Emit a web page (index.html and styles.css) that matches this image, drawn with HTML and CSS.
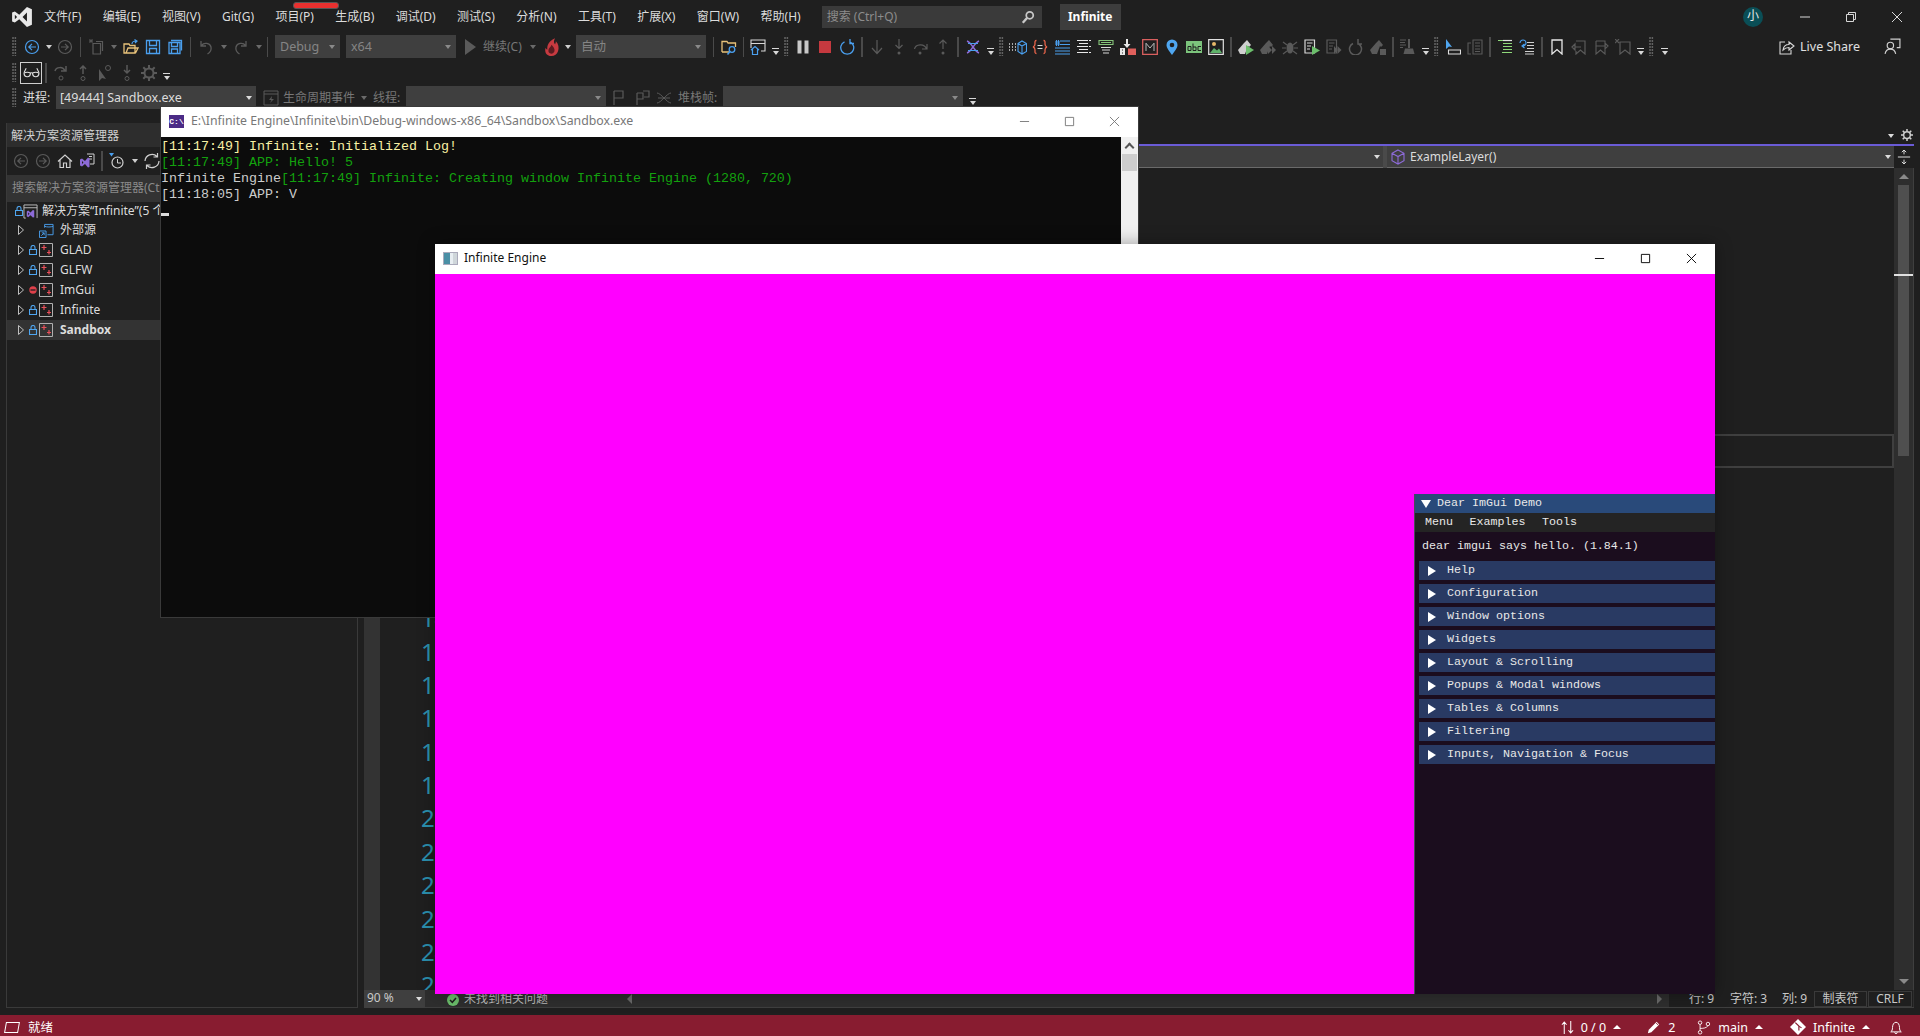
FILE: index.html
```html
<!DOCTYPE html>
<html lang="zh-CN">
<head>
<meta charset="utf-8">
<title>Infinite - Microsoft Visual Studio</title>
<link rel="stylesheet" href="styles.css">
</head>
<body>
<svg class="sprite" aria-hidden="true">
<defs>
<symbol id="back" viewBox="0 0 16 16"><circle cx="8" cy="8" r="6.5" fill="none" stroke="currentColor" stroke-width="1.2"/><path d="M12 8H5M8 4.8 4.8 8 8 11.2" fill="none" stroke="currentColor" stroke-width="1.2"/></symbol>
<symbol id="fwd" viewBox="0 0 16 16"><circle cx="8" cy="8" r="6.5" fill="none" stroke="currentColor" stroke-width="1.2"/><path d="M4 8h7M8 4.8 11.2 8 8 11.2" fill="none" stroke="currentColor" stroke-width="1.2"/></symbol>
<symbol id="newp" viewBox="0 0 16 16"><path d="M5 4.5h7.5V15H5zM8 2.5h6.5V12" fill="none" stroke="currentColor" stroke-width="1.2"/><path d="M3 0v4M1 2h4M1 .5l4 3M5 .5l-4 3" stroke="currentColor" stroke-width=".8"/></symbol>
<symbol id="open" viewBox="0 0 16 16"><path d="M1 14V5h5l1 1.500h5V14zM3 14l2-5h10l-2.500 5" fill="#1f1f1f" stroke="#e8c27a" stroke-width="1.300"/><path d="M9 5c0-2 2-3 4-3M11.500.5 14 2l-2 2" fill="none" stroke="#4a9fee" stroke-width="1.200"/></symbol>
<symbol id="save" viewBox="0 0 16 16"><path d="M1.500 1.500h13v13h-13zM4.500 1.500v5h7v-5M4.500 14.500v-5h7v5" fill="none" stroke="#4a9fee" stroke-width="1.300"/></symbol>
<symbol id="saveall" viewBox="0 0 16 16"><path d="M2 3.500h11v11H2zM4.500 3.500v4h6v-4M4.500 14.500v-4.500h6v4.500M4 1.500h10.500v10" fill="none" stroke="#4a9fee" stroke-width="1.300"/></symbol>
<symbol id="undo" viewBox="0 0 16 16"><path d="M3 2v5h5M3.500 6.500C6 3 12 4 13 8c.6 3-1 5.500-3.500 7" fill="none" stroke="currentColor" stroke-width="1.300"/></symbol>
<symbol id="redo" viewBox="0 0 16 16"><path d="M13 2v5H8M12.500 6.500C10 3 4 4 3 8c-.6 3 1 5.500 3.500 7" fill="none" stroke="currentColor" stroke-width="1.300"/></symbol>
<symbol id="play" viewBox="0 0 16 16"><path d="M2 0v16l11-8z" fill="currentColor"/></symbol>
<symbol id="flame" viewBox="0 0 16 16"><path d="M8 16C3.500 16 2 12.500 3 9c.4 1 1 1.500 1.500 1.500C4 7 6 3 11 1 9.500 3.500 10 5 11 6c.5-.8.7-1.500.7-2.500C14 6 14.500 9 13.500 12c-.8 2.500-3 4-5.500 4z" fill="#c63a40"/><path d="M8 14c-2 0-3-1.500-2.500-3.500.5-1.500 2-2 2.500-4 1.500 1.500 3 3.500 2.500 5.500C10 13.300 9 14 8 14z" fill="#5a1b20"/></symbol>
<symbol id="fsearch" viewBox="0 0 16 16"><path d="M1 13V2.500h5l1 1.500h7.500v4M1 13h7" fill="none" stroke="#e8c27a" stroke-width="1.300"/><circle cx="11" cy="10.500" r="2.800" fill="none" stroke="#4a9fee" stroke-width="1.300"/><path d="M9 12.500 6.500 15.500" stroke="#4a9fee" stroke-width="1.500"/></symbol>
<symbol id="winhome" viewBox="0 0 16 16"><path d="M1 9V1h14v11h-4M1 4.500h14" fill="none" stroke="#d8d8d8" stroke-width="1.100"/><path d="M1 11l4-3.500L9 11M2.500 10v5.500h5V10" fill="none" stroke="#4a9fee" stroke-width="1.200"/></symbol>
<symbol id="pause" viewBox="0 0 16 16"><path d="M2.500 1.500h4v13h-4zM9.500 1.500h4v13h-4z" fill="#c8c8c8"/></symbol>
<symbol id="stop" viewBox="0 0 16 16"><path d="M2 2h12v12H2z" fill="#c5393f"/></symbol>
<symbol id="restart" viewBox="0 0 16 16"><path d="M5.500 2.800a6.500 6.500 0 1 0 5.500 0M11 0v4.500h4" fill="none" stroke="#4a9fee" stroke-width="1.300"/></symbol>
<symbol id="sdown" viewBox="0 0 16 16"><path d="M8 1v13M3 9l5 5.500L13 9" fill="none" stroke="currentColor" stroke-width="1.200"/></symbol>
<symbol id="sover" viewBox="0 0 16 16"><circle cx="8" cy="14" r="1.500" fill="currentColor"/><path d="M8 0v9M4.500 6 8 9.500 11.500 6" fill="none" stroke="currentColor" stroke-width="1.200"/></symbol>
<symbol id="scurve" viewBox="0 0 16 16"><circle cx="7" cy="14" r="1.500" fill="currentColor"/><path d="M1.500 10c1-5 10-6 12 0M14 5v5h-5" fill="none" stroke="currentColor" stroke-width="1.200"/></symbol>
<symbol id="sup" viewBox="0 0 16 16"><circle cx="8" cy="14" r="1.500" fill="currentColor"/><path d="M8 10V1M4.500 4.500 8 1l3.500 3.500" fill="none" stroke="currentColor" stroke-width="1.200"/></symbol>
<symbol id="dna" viewBox="0 0 16 16"><path d="M2 2c5 2 7 10 12 12M14 2C9 4 7 12 2 14" fill="none" stroke="#8d6bd8" stroke-width="1.400"/><path d="M3 4.500h10M3 11.500h10" stroke="#4a9fee" stroke-width="1.200"/></symbol>
<symbol id="cube" viewBox="0 0 18 16"><path d="M0 5h1M3 5h1M6 5h1M0 8h1M3 8h1M6 8h1M0 11h1M3 11h1M6 11h1" stroke="#d8d8d8" stroke-width="1.500"/><path d="M9 4.500 13 2l4.500 2.500v8L13 15l-4-2.500zM9 4.500l4 2.500 4.500-2.500M13 7v8" fill="none" stroke="#4a9fee" stroke-width="1.100"/></symbol>
<symbol id="braces" viewBox="0 0 16 16"><path d="M4.500 1.500C2.500 1.500 3 3.500 3 5S3 7.500 1 8c2 .5 2 1.500 2 3s-.5 3.500 1.500 3.500M11.500 1.500c2 0 1.500 2 1.500 3.500s0 2.500 2 3c-2 .5-2 1.500-2 3s.5 3.500-1.500 3.500" fill="none" stroke="#e8644a" stroke-width="1.300"/><path d="M5.500 6.500h5M5.500 9.500h5" stroke="#d8d8d8" stroke-width="1.100"/></symbol>
<symbol id="hlist" viewBox="0 0 16 16"><path d="M6 2h10M6 5.500h10M1 9h15M1 12h15M1 15h15M2.500 1v6M4.500 1v6M1 3h5M1 5h5" stroke="#4a9fee" stroke-width="1.100"/></symbol>
<symbol id="wlines" viewBox="0 0 16 16"><path d="M1 1.500h14M3 4.500h9M1 7.500h14M3 10.500h9M1 13.500h14" stroke="#e8e8e8" stroke-width="1.100" stroke-dasharray="11 1"/></symbol>
<symbol id="glines" viewBox="0 0 16 16"><path d="M1 1.500h14v4H1z" fill="none" stroke="#86c37a" stroke-width="1.100"/><path d="M3 8.500h10M4 11h8M5 14h6" stroke="#d8d8d8" stroke-width="1.100"/><path d="M3 3.500h10" stroke="#86c37a"/></symbol>
<symbol id="dl" viewBox="0 0 16 16"><path d="M6 0v5H3.500L7 9l3.500-4H8V0z" fill="#e8e8e8"/><path d="M0 9h5v7H0z" fill="#e8e8e8"/><path d="M2 11h1M2 14h1" stroke="#1f1f1f" stroke-width="1.200"/><path d="M8 9.500h8V16H8z" fill="#e0605c"/></symbol>
<symbol id="mbox" viewBox="0 0 16 16"><path d="M.7.7h14.600v14.600H.7z" fill="none" stroke="#d9605f" stroke-width="1.300"/><path d="M4 12V4.200L8 9l4-4.800V12" fill="none" stroke="#b8b8b8" stroke-width="1"/></symbol>
<symbol id="pin" viewBox="0 0 16 16"><path d="M8 16C5 11.500 2.500 9 2.500 6a5.500 5.500 0 0 1 11 0c0 3-2.500 5.500-5.500 10z" fill="#4fa6f0"/><circle cx="8" cy="6" r="2.300" fill="#1f1f1f"/></symbol>
<symbol id="abc" viewBox="0 0 16 16"><path d="M0 2h16v12H0z" fill="#7cc47c"/><path d="M2 7.500h3v4H2zM7 4.500v7h3v-3.500H7M15 7.500h-3v4h3" fill="none" stroke="#1f1f1f" stroke-width="1"/></symbol>
<symbol id="image" viewBox="0 0 16 16"><path d="M.7.7h14.600v14.600H.7z" fill="#1f1f1f" stroke="#e0e0e0" stroke-width="1.200"/><circle cx="6" cy="5" r="2" fill="#e8b86a"/><path d="M2 14l4-5 3 2.500 2-2 3 4.500z" fill="#5fb36a"/></symbol>
<symbol id="hplay" viewBox="0 0 16 16"><path d="M0 11 6 4 9 1l4 5-2 2-1-1-3 8H2z" fill="currentColor"/><path d="M8 6v10l8-5z" fill="#6cbf6c"/></symbol>
<symbol id="hgray" viewBox="0 0 16 16"><path d="M0 11 6 4 9 1l4 5-2 2-1-1-3 8H2z" fill="currentColor"/><path d="M8 7v8l4-4zM12 7v8l4-4z" fill="currentColor"/></symbol>
<symbol id="hbox" viewBox="0 0 16 16"><path d="M0 11 6 4 9 1l4 5-2 2-1-1-3 8H2z" fill="currentColor"/><path d="M10 10h6v6h-6z" fill="currentColor"/></symbol>
<symbol id="bug" viewBox="0 0 16 16"><ellipse cx="8" cy="9" rx="3.500" ry="5.500" fill="currentColor"/><path d="M1 3l4 3M15 3l-4 3M0 9h4M16 9h-4M1 15l4-3M15 15l-4-3" stroke="currentColor" stroke-width="1.200"/></symbol>
<symbol id="docplay" viewBox="0 0 16 16"><path d="M1 1h9.500v13H1zM3 4h5.500M3 7h4M3 10h3" fill="none" stroke="#d8d8d8" stroke-width="1.200"/><path d="M8 7v9l8-4.500z" fill="#6cbf6c"/></symbol>
<symbol id="docgray" viewBox="0 0 16 16"><path d="M1 1h9.500v13H1zM3 4h5.500M3 7h4M3 10h3" fill="none" stroke="currentColor" stroke-width="1.200"/><path d="M8 7v8l3.500-4zM11.500 7v8l4-4z" fill="currentColor"/></symbol>
<symbol id="refresh" viewBox="0 0 16 16"><path d="M5 4.500a6 6 0 1 0 5 0M10 0v5h4" fill="none" stroke="currentColor" stroke-width="1.500"/></symbol>
<symbol id="broom" viewBox="0 0 16 16"><path d="M0 1h6M0 3.500h5M0 6h6M0 8.500h3" stroke="currentColor" stroke-width="1"/><path d="M8 0h2v9H8z" fill="currentColor"/><path d="M5 9.500h8l1.500 5.500H3.500z" fill="currentColor"/></symbol>
<symbol id="cursor" viewBox="0 0 16 16"><path d="M1 0v10l3-2.500L7 8z" fill="#4fa6f0"/><path d="M3.500 11h12v4h-12z" fill="none" stroke="#e0e0e0" stroke-width="1.100"/></symbol>
<symbol id="pages" viewBox="0 0 16 16"><path d="M6 1h9v14H6zM8 4h5M8 7h5M8 10h5M8 12.500h5M4 4H1v11h3" fill="none" stroke="currentColor" stroke-width="1.100"/></symbol>
<symbol id="gindent" viewBox="0 0 16 16"><path d="M1 1.500h5M6 4.500h9M6 7.500h9M6 10.500h9M5 13.500h10" stroke="#8fd97a" stroke-width="1.200"/><path d="M6 1.500h9" stroke="#e0e0e0" stroke-width="1.200"/></symbol>
<symbol id="wrap" viewBox="0 0 16 16"><path d="M1 4a3 3 0 1 1 6 0c0 2-2 3-3.500 3M5.500 5 3 7l2.500 2" fill="none" stroke="#4a9fee" stroke-width="1.200"/><path d="M8 3.500h7M8 6.500h7M8 9.500h7M6 12.500h9M6 15h9" stroke="#d0d0d0" stroke-width="1"/></symbol>
<symbol id="bm" viewBox="0 0 16 16"><path d="M3 1h10v14l-5-4.500L3 15z" fill="none" stroke="#e8e8e8" stroke-width="1.300"/></symbol>
<symbol id="bmprev" viewBox="0 0 16 16"><path d="M5 2h9v13l-4.500-4L5 15v-3M4 8h6M1 8l3-3v6z" fill="none" stroke="currentColor" stroke-width="1.200"/></symbol>
<symbol id="bmnext" viewBox="0 0 16 16"><path d="M3 2h9v3M12 10v5L7.500 11 3 15V2M3 7h10M15 7l-3-3v6z" fill="none" stroke="currentColor" stroke-width="1.100"/></symbol>
<symbol id="bmclear" viewBox="0 0 16 16"><path d="M5 3h10v12l-5-4-5 4zM0 0l4 4M4 0 0 4" fill="none" stroke="currentColor" stroke-width="1.200"/></symbol>
<symbol id="share" viewBox="0 0 16 16"><path d="M6 3H1v12h11v-4" fill="none" stroke="#d8d8d8" stroke-width="1.100"/><path d="M4 11c.5-3.500 3-5.500 6-5.500V3l5 4-5 4V8.500c-2.500 0-4.500 1-6 2.500z" fill="none" stroke="#d8d8d8" stroke-width="1.100"/></symbol>
<symbol id="feedback" viewBox="0 0 16 16"><circle cx="6" cy="7" r="3" fill="none" stroke="#d0d0d0" stroke-width="1.100"/><path d="M1 15c.5-3 2-4.500 5-4.500s4.500 1.500 5 4.500M6 1h9v8h-3" fill="none" stroke="#d0d0d0" stroke-width="1.100"/></symbol>
<symbol id="glasses" viewBox="0 0 16 16"><path d="M1 8 3 4M15 8l-2-4" stroke="#e0e0e0"/><path d="M1 8.500c1.500-1 4.500-1 6 0 0 2-1 3.500-3 3.500S1 10.500 1 8.500zM9 8.500c1.500-1 4.500-1 6 0 0 2-1 3.500-3 3.500s-3-1.500-3-3.500zM7 8.500c.6-.3 1.400-.3 2 0" fill="none" stroke="#e0e0e0" stroke-width="1.100"/></symbol>
<symbol id="gstep" viewBox="0 0 16 16"><circle cx="8" cy="13" r="2" fill="none" stroke="currentColor"/><path d="M2 6c1-4 8-5 10 0M13 1v5H8" fill="none" stroke="currentColor" stroke-width="1.500"/></symbol>
<symbol id="gup" viewBox="0 0 16 16"><circle cx="8" cy="13.500" r="2" fill="none" stroke="currentColor"/><path d="M8 9V1M5 4l3-3 3 3" fill="none" stroke="currentColor" stroke-width="1.500"/></symbol>
<symbol id="gcur" viewBox="0 0 16 16"><path d="M2 4v12l3-3 4 1z" fill="currentColor"/><circle cx="11" cy="3" r="2.500" fill="none" stroke="currentColor"/></symbol>
<symbol id="gdown" viewBox="0 0 16 16"><circle cx="8" cy="13.500" r="2" fill="none" stroke="currentColor"/><path d="M8 0v8M5 5l3 3 3-3" fill="none" stroke="currentColor" stroke-width="1.500"/></symbol>
<symbol id="gear" viewBox="0 0 16 16"><circle cx="8" cy="8" r="4.500" fill="none" stroke="currentColor" stroke-width="2"/><path d="M8 0v3M8 13v3M0 8h3M13 8h3M2.300 2.300l2.200 2.200M11.500 11.500l2.200 2.200M13.700 2.300l-2.200 2.200M4.500 11.500l-2.200 2.200" stroke="currentColor" stroke-width="2"/></symbol>
<symbol id="life" viewBox="0 0 16 16"><path d="M1 1h14v14H1zM1 4h14" fill="none" stroke="currentColor"/><path d="M9 6 6 10h2.500L7 13l4-4H8.500z" fill="currentColor"/></symbol>
<symbol id="flag" viewBox="0 0 16 16"><path d="M2 1v14M2 1h9v7H2" fill="none" stroke="currentColor" stroke-width="1.200"/></symbol>
<symbol id="flag2" viewBox="0 0 16 16"><path d="M1 3v12M1 3h6v6H1M7 1h6v6H8" fill="none" stroke="currentColor" stroke-width="1.200"/></symbol>
<symbol id="frames" viewBox="0 0 16 16"><path d="M1 3c4 0 10 10 14 10M15 3C11 3 5 13 1 13M2 8h12" fill="none" stroke="currentColor"/></symbol>
<symbol id="home" viewBox="0 0 16 16"><path d="M1 8.500 8 2l7 6.500M3 7v7.500h3.500V10h3v4.500H13V7" fill="none" stroke="#d0d0d0" stroke-width="1.200"/></symbol>
<symbol id="vsfile" viewBox="0 0 16 16"><path d="M8 1h7v10h-4M10 3.500h3M10 6h3" fill="none" stroke="#d0d0d0"/><path d="M1 6.500l2-1L6 8l3-3.500 1.500 1V14l-1.500.5L6 11l-3 2.500-2-1zM3 8v3l1.500-1.500z" fill="#8d6bd8" fill-rule="evenodd"/></symbol>
<symbol id="hist" viewBox="0 0 16 16"><circle cx="8.500" cy="9.500" r="5.500" fill="none" stroke="#d0d0d0" stroke-width="1.200"/><path d="M8.500 6v4H12" fill="none" stroke="#d0d0d0"/><path d="M0 0h5L2.500 3.500z" fill="#4a9fee"/></symbol>
<symbol id="sync" viewBox="0 0 16 16"><path d="M1 8a7 7 0 0 1 12-4.500M15 8a7 7 0 0 1-12 4.500M13.500 0v4h-4M2.500 16v-4h4" fill="none" stroke="#d0d0d0" stroke-width="1.200"/></symbol>
<symbol id="sol" viewBox="0 0 16 16"><path d="M1 15V1h14v14M1 4h14M1 15h2" fill="none" stroke="#c0c0c0"/><path d="M4 8l1.500-1L8 9l2.500-2.500L12 7v7l-1.500.5L8 12l-2.500 2L4 13zM5.500 9v3L7 10.500z" fill="#8d6bd8" fill-rule="evenodd"/></symbol>
<symbol id="ext" viewBox="0 0 16 16"><path d="M6 5V1.500h9v11H9" fill="none" stroke="#4a9fee"/><path d="M6 3.500c2 1 7 1 9 0" fill="none" stroke="#4a9fee"/><path d="M.5 8.500h7v7h-7z" fill="#1f1f1f" stroke="#4a9fee"/><path d="M2.500 13.500l3-3M3 10.500h2.500V13" fill="none" stroke="#4a9fee"/></symbol>
<symbol id="proj" viewBox="0 0 14 14"><path d="M.5.500h13v13H.500z" fill="none" stroke="#b0b0b0"/><path d="M5 2v5M2.500 4.500h5M10 7v4.500M8 9.500h4" stroke="#e8505a" stroke-width="1.200"/></symbol>
<symbol id="lock" viewBox="0 0 8 10"><path d="M.5 4.500h7v5h-7zM2 4.500V2.500a2 2 0 0 1 4 0v2" fill="none" stroke="#4fa6f0" stroke-width="1.100"/></symbol>
<symbol id="nolock" viewBox="0 0 8 10"><circle cx="4" cy="5" r="3.700" fill="#e0404a"/><path d="M1.500 5h5" stroke="#1f1f1f" stroke-width="1.300"/></symbol>
<symbol id="carat" viewBox="0 0 6 10"><path d="M.5.500v9L5.500 5z" fill="none" stroke="#c0c0c0"/></symbol>
<symbol id="mag" viewBox="0 0 16 16"><circle cx="10" cy="6" r="4" fill="none" stroke="#c8c8c8" stroke-width="2"/><path d="M7 9l-5 5.500" stroke="#c8c8c8" stroke-width="2.600"/></symbol>
<symbol id="cls" viewBox="0 0 16 16"><path d="M8 1 14 4.300v7.400L8 15l-6-3.300V4.300zM2 4.300 8 7.600l6-3.300M8 7.600V15" fill="none" stroke="#8d6bd8" stroke-width="1.100"/></symbol>
<symbol id="split" viewBox="0 0 16 16"><path d="M1 8h14M8 0v5M8 16v-5M5.500 2.500 8 0l2.500 2.500M5.500 13.500 8 16l2.500-2.500" fill="none" stroke="#e0e0e0" stroke-width="1.100"/></symbol>
<symbol id="check" viewBox="0 0 12 12"><circle cx="6" cy="6" r="6" fill="#6cbf6c"/><path d="M3 6l2.300 2.300L9 4" fill="none" stroke="#1f1f1f" stroke-width="1.500"/></symbol>
<symbol id="pencil" viewBox="0 0 16 16"><path d="M1 15l1-4L11 2l3 3-9 9z" fill="#fff"/><path d="M10 3l3 3" stroke="#881c30"/></symbol>
<symbol id="branch" viewBox="0 0 16 16"><circle cx="3.500" cy="2.500" r="2" fill="none" stroke="#fff"/><circle cx="3.500" cy="13.500" r="2" fill="none" stroke="#fff"/><circle cx="12.500" cy="4" r="2" fill="none" stroke="#fff"/><path d="M3.500 4.500v7M3.500 9c3 0 7 0 9-3" fill="none" stroke="#fff"/></symbol>
<symbol id="gitd" viewBox="0 0 18 18"><path d="M9 0l9 9-9 9-9-9z" fill="#fff"/><path d="M6 4l4 4v5M10 8l3 2" fill="none" stroke="#881c30" stroke-width="1.300"/></symbol>
<symbol id="bell" viewBox="0 0 16 16"><path d="M2 13c1.500-1 2-2.500 2-5 0-3 1.500-6 4-6s4 3 4 6c0 2.500.5 4 2 5zM6.500 13.500c0 2 3 2 3 0" fill="none" stroke="#fff" stroke-width="1.100"/></symbol>
<symbol id="updn" viewBox="0 0 14 14"><path d="M3.500 14V1M1 4l2.500-3L6 4M10.500 0v13M8 10l2.500 3 2.500-3" fill="none" stroke="#fff" stroke-width="1.100"/></symbol>
<symbol id="logo" viewBox="0 0 20 20"><path d="M14.500 1 19 3v14l-4.500 2-7-7-4 3L1 14V6l2.500-1 4 3zM14.500 6l-4 4 4 4zM3.500 8v4l2-2z" fill="#e8e8e8" fill-rule="evenodd"/></symbol>
</defs>
</svg>

<header class="vs-head">
  <div class="red-pill"></div>
  <div class="titlebar">
    <svg class="logo"><use href="#logo"/></svg>
    <nav class="menu">
      <span>文件(F)</span><span>编辑(E)</span><span>视图(V)</span><span>Git(G)</span><span>项目(P)</span><span>生成(B)</span><span>调试(D)</span><span>测试(S)</span><span>分析(N)</span><span>工具(T)</span><span>扩展(X)</span><span>窗口(W)</span><span>帮助(H)</span>
    </nav>
    <div class="search"><span>搜索 (Ctrl+Q)</span><svg class="ic14"><use href="#mag"/></svg></div>
    <div class="sln-name">Infinite</div>
    <div class="win-right">
      <div class="avatar">小</div>
      <div class="wc"><svg viewBox="0 0 12 12"><path d="M1 6h10" stroke="#d8d8d8"/></svg></div>
      <div class="wc"><svg viewBox="0 0 12 12"><path d="M1.500 3.500h7v7h-7zM3.500 3.500v-2h7v7h-2" fill="none" stroke="#d8d8d8"/></svg></div>
      <div class="wc"><svg viewBox="0 0 12 12"><path d="M1 1l10 10M11 1 1 11" stroke="#d8d8d8"/></svg></div>
    </div>
  </div>

  <div class="tb tb1">
    <span class="grip"></span>
    <span class="i first blue"><svg><use href="#back"/></svg></span><span class="d w11"></span>
    <span class="i off"><svg><use href="#fwd"/></svg></span><span class="sep w9"></span>
    <span class="i off"><svg><use href="#newp"/></svg></span><span class="d off"></span>
    <span class="i"><svg><use href="#open"/></svg></span>
    <span class="i"><svg><use href="#save"/></svg></span>
    <span class="i"><svg><use href="#saveall"/></svg></span><span class="sep w9"></span>
    <span class="i off"><svg><use href="#undo"/></svg></span><span class="d off"></span>
    <span class="i off"><svg><use href="#redo"/></svg></span><span class="d off"></span>
    <span class="sep w5"></span>
    <div class="combo c-debug"><span>Debug</span></div>
    <div class="combo c-x64"><span>x64</span></div>
    <span class="i off play-slot"><svg><use href="#play"/></svg></span>
    <span class="tb-label continue">继续(C)</span><span class="d off"></span>
    <span class="i flame-slot"><svg><use href="#flame"/></svg></span><span class="d w11"></span>
    <div class="combo c-auto"><span>自动</span></div>
    <span class="sep after-auto"></span>
    <span class="i"><svg><use href="#fsearch"/></svg></span><span class="sep w7"></span>
    <span class="i"><svg><use href="#winhome"/></svg></span><span class="ov"></span><span class="grip g2"></span>
    <span class="i g3"><svg><use href="#pause"/></svg></span>
    <span class="i"><svg><use href="#stop"/></svg></span>
    <span class="i"><svg><use href="#restart"/></svg></span><span class="sep"></span>
    <span class="i off"><svg><use href="#sdown"/></svg></span>
    <span class="i off"><svg><use href="#sover"/></svg></span>
    <span class="i off"><svg><use href="#scurve"/></svg></span>
    <span class="i off"><svg><use href="#sup"/></svg></span><span class="sep"></span>
    <span class="i"><svg><use href="#dna"/></svg></span><span class="ov"></span><span class="grip g2"></span>
    <span class="i g3"><svg class="wide"><use href="#cube"/></svg></span>
    <span class="i"><svg><use href="#braces"/></svg></span>
    <span class="i"><svg><use href="#hlist"/></svg></span>
    <span class="i"><svg><use href="#wlines"/></svg></span>
    <span class="i"><svg><use href="#glines"/></svg></span>
    <span class="i"><svg><use href="#dl"/></svg></span>
    <span class="i"><svg><use href="#mbox"/></svg></span>
    <span class="i"><svg><use href="#pin"/></svg></span>
    <span class="i"><svg><use href="#abc"/></svg></span>
    <span class="i"><svg><use href="#image"/></svg></span><span class="sep"></span>
    <span class="i light"><svg><use href="#hplay"/></svg></span>
    <span class="i off"><svg><use href="#hgray"/></svg></span>
    <span class="i off"><svg><use href="#bug"/></svg></span>
    <span class="i"><svg><use href="#docplay"/></svg></span>
    <span class="i off"><svg><use href="#docgray"/></svg></span>
    <span class="i off"><svg><use href="#refresh"/></svg></span>
    <span class="i off"><svg><use href="#hbox"/></svg></span><span class="sep"></span>
    <span class="i off"><svg><use href="#broom"/></svg></span><span class="ov"></span><span class="grip g2"></span>
    <span class="i g3"><svg><use href="#cursor"/></svg></span>
    <span class="i off"><svg><use href="#pages"/></svg></span><span class="sep"></span>
    <span class="i"><svg><use href="#gindent"/></svg></span>
    <span class="i"><svg><use href="#wrap"/></svg></span><span class="sep"></span>
    <span class="i"><svg><use href="#bm"/></svg></span>
    <span class="i off"><svg><use href="#bmprev"/></svg></span>
    <span class="i off"><svg><use href="#bmnext"/></svg></span>
    <span class="i off"><svg><use href="#bmclear"/></svg></span><span class="ov"></span><span class="grip g2"></span>
    <span class="ov ov-last"></span>
    <div class="share"><svg><use href="#share"/></svg><span>Live Share</span></div>
    <svg class="feedback"><use href="#feedback"/></svg>
  </div>

  <div class="tb tb2">
    <span class="grip"></span>
    <span class="glass"><svg><use href="#glasses"/></svg></span><span class="sep"></span>
    <span class="i off"><svg><use href="#gstep"/></svg></span>
    <span class="i off"><svg><use href="#gup"/></svg></span>
    <span class="i off"><svg><use href="#gcur"/></svg></span>
    <span class="i off"><svg><use href="#gdown"/></svg></span>
    <span class="i off"><svg><use href="#gear"/></svg></span><span class="ov"></span>
  </div>

  <div class="tb tb3">
    <span class="grip"></span>
    <span class="tb-label lit proc-label">进程:</span>
    <div class="combo c-proc lit"><span>[49444] Sandbox.exe</span><i class="caret bright"></i></div>
    <span class="i off life-slot"><svg><use href="#life"/></svg></span>
    <span class="tb-label life-label">生命周期事件</span><span class="d off w11"></span>
    <span class="tb-label thread-label">线程:</span>
    <div class="combo c-thread"></div>
    <span class="i off flag-slot"><svg><use href="#flag"/></svg></span>
    <span class="i off flag-slot2"><svg><use href="#flag2"/></svg></span>
    <span class="i off flag-slot3"><svg><use href="#frames"/></svg></span>
    <span class="tb-label stack-label">堆栈帧:</span>
    <div class="combo c-stack"></div>
    <span class="ov"></span>
  </div>
</header>

<main class="workspace">
  <aside class="solution">
    <div class="sol-title">解决方案资源管理器</div>
    <div class="sol-tools">
      <span class="i off"><svg><use href="#back"/></svg></span>
      <span class="i off"><svg><use href="#fwd"/></svg></span>
      <span class="i"><svg><use href="#home"/></svg></span>
      <span class="i"><svg><use href="#vsfile"/></svg></span><span class="sep"></span>
      <span class="i"><svg><use href="#hist"/></svg></span><span class="d"></span>
      <span class="i"><svg><use href="#sync"/></svg></span>
    </div>
    <div class="sol-search">搜索解决方案资源管理器(Ctrl+;)</div>
    <ul class="tree">
      <li class="tree-root"><svg class="lock"><use href="#lock"/></svg><svg class="node"><use href="#sol"/></svg><span>解决方案“Infinite”(5 个项目，共 5 个)</span></li>
      <li><svg class="arrow"><use href="#carat"/></svg><span class="nolockslot"></span><svg class="node ext"><use href="#ext"/></svg><span>外部源</span></li>
      <li><svg class="arrow"><use href="#carat"/></svg><svg class="lock"><use href="#lock"/></svg><svg class="node"><use href="#proj"/></svg><span>GLAD</span></li>
      <li><svg class="arrow"><use href="#carat"/></svg><svg class="lock"><use href="#lock"/></svg><svg class="node"><use href="#proj"/></svg><span>GLFW</span></li>
      <li><svg class="arrow"><use href="#carat"/></svg><svg class="lock"><use href="#nolock"/></svg><svg class="node"><use href="#proj"/></svg><span>ImGui</span></li>
      <li><svg class="arrow"><use href="#carat"/></svg><svg class="lock"><use href="#lock"/></svg><svg class="node"><use href="#proj"/></svg><span>Infinite</span></li>
      <li class="active"><svg class="arrow"><use href="#carat"/></svg><svg class="lock"><use href="#lock"/></svg><svg class="node"><use href="#proj"/></svg><span>Sandbox</span></li>
    </ul>
  </aside>

  <section class="editor">
    <div class="tabstrip"><i class="caret bright"></i><svg class="tab-gear"><use href="#gear"/></svg></div>
    <div class="navbar">
      <div class="nav-combo nav-a"><i class="caret bright"></i></div>
      <div class="nav-combo nav-b"><svg><use href="#cls"/></svg><span>ExampleLayer()</span><i class="caret bright"></i></div>
      <div class="nav-split"><svg><use href="#split"/></svg></div>
    </div>
    <div class="code">
      <div class="glyph-margin"></div>
      <div class="lines">
        <div class="ln">1</div><div class="ln">2</div><div class="ln">3</div><div class="ln">4</div><div class="ln">5</div>
        <div class="ln">6</div><div class="ln">7</div><div class="ln">8</div><div class="ln current">9</div><div class="ln">10</div>
        <div class="ln">11</div><div class="ln">12</div><div class="ln">13</div><div class="ln">14</div><div class="ln">15</div>
        <div class="ln">16</div><div class="ln">17</div><div class="ln">18</div><div class="ln">19</div><div class="ln">20</div>
        <div class="ln">21</div><div class="ln">22</div><div class="ln">23</div><div class="ln">24</div><div class="ln">25</div>
      </div>
      <div class="vscroll">
        <i class="tri-up"></i>
        <div class="vthumb"></div>
        <div class="vmark"></div>
        <i class="tri-down"></i>
      </div>
    </div>
    <div class="editor-status">
      <div class="zoom-box"><span>90 %</span><i class="caret bright"></i></div>
      <div class="problems"><svg><use href="#check"/></svg><span>未找到相关问题</span></div>
      <div class="hscroll"><i class="tri-left"></i><i class="tri-right"></i></div>
      <div class="pos">
        <span class="p1">行: 9</span><span class="p2">字符: 3</span><span class="p3">列: 9</span>
        <span class="pbox tabbox">制表符</span><span class="pbox crlf">CRLF</span>
      </div>
    </div>
  </section>
</main>

<footer class="statusbar">
  <span class="ready-ic"></span><span class="ready">就绪</span>
  <div class="st-right">
    <svg class="st-updn"><use href="#updn"/></svg><span class="st-t">0 / 0</span><i class="tri-w"></i>
    <svg class="st-pen"><use href="#pencil"/></svg><span class="st-t">2</span>
    <svg class="st-br"><use href="#branch"/></svg><span class="st-t">main</span><i class="tri-w"></i>
    <svg class="st-git"><use href="#gitd"/></svg><span class="st-t">Infinite</span><i class="tri-w"></i>
    <svg class="st-bell"><use href="#bell"/></svg>
  </div>
</footer>

<div class="console">
  <div class="con-title">
    <span class="con-icon">C:\</span>
    <span class="con-path">E:\Infinite Engine\Infinite\bin\Debug-windows-x86_64\Sandbox\Sandbox.exe</span>
    <div class="con-ctrl">
      <svg viewBox="0 0 12 12"><path d="M1 6h10" stroke="#777"/></svg>
      <svg viewBox="0 0 12 12"><path d="M1.500 1.500h9v9h-9z" fill="none" stroke="#777"/></svg>
      <svg viewBox="0 0 12 12"><path d="M1 1l10 10M11 1 1 11" stroke="#777"/></svg>
    </div>
  </div>
  <div class="con-body">
    <pre class="con-text"><span class="y">[11:17:49] Infinite: Initialized Log!</span>
<span class="g">[11:17:49] APP: Hello! 5</span>
Infinite Engine<span class="g">[11:17:49] Infinite: Creating window Infinite Engine (1280, 720)</span>
[11:18:05] APP: V
<span class="cursor-mark"></span></pre>
    <div class="con-scroll"><i class="con-up"></i><div class="con-thumb"></div></div>
  </div>
</div>

<div class="gl-window">
  <div class="gl-title">
    <span class="gl-icon"></span><span>Infinite Engine</span>
    <div class="gl-ctrl">
      <svg viewBox="0 0 12 12"><path d="M1 6h10" stroke="#000"/></svg>
      <svg viewBox="0 0 12 12"><path d="M1.500 1.500h9v9h-9z" fill="none" stroke="#000"/></svg>
      <svg viewBox="0 0 12 12"><path d="M1 1l10 10M11 1 1 11" stroke="#000"/></svg>
    </div>
  </div>
  <div class="gl-canvas">
    <div class="imgui">
      <div class="im-title"><i class="tri-im-down"></i><span>Dear ImGui Demo</span></div>
      <div class="im-menu"><span>Menu</span><span>Examples</span><span>Tools</span></div>
      <div class="im-body">
        <div class="im-hello">dear imgui says hello. (1.84.1)</div>
        <div class="im-h"><i class="tri-im"></i><span>Help</span></div>
        <div class="im-h"><i class="tri-im"></i><span>Configuration</span></div>
        <div class="im-h"><i class="tri-im"></i><span>Window options</span></div>
        <div class="im-h"><i class="tri-im"></i><span>Widgets</span></div>
        <div class="im-h"><i class="tri-im"></i><span>Layout &amp; Scrolling</span></div>
        <div class="im-h"><i class="tri-im"></i><span>Popups &amp; Modal windows</span></div>
        <div class="im-h"><i class="tri-im"></i><span>Tables &amp; Columns</span></div>
        <div class="im-h"><i class="tri-im"></i><span>Filtering</span></div>
        <div class="im-h"><i class="tri-im"></i><span>Inputs, Navigation &amp; Focus</span></div>
      </div>
    </div>
  </div>
</div>
</body>
</html>
```

FILE: styles.css
```css
* { box-sizing: border-box; }
html, body { margin: 0; height: 100%; }
body {
  width: 1920px; height: 1036px; overflow: hidden; position: relative;
  display: flex; flex-direction: column;
  background: #1f1f1f; color: #d8d8d8;
  font: 12px/1.2 "Noto Sans", "Noto Sans CJK SC", sans-serif;
}
.sprite { position: absolute; width: 0; height: 0; }
svg { display: block; }
i { display: block; }

/* ---------- title bar ---------- */
.vs-head { position: relative; height: 110px; flex: none; }
.red-pill { position: absolute; left: 293px; top: 2px; width: 46px; height: 7px; background: #e8302f; border: 1px solid #555; border-radius: 3px; }
.titlebar { height: 33px; display: flex; align-items: center; }
.logo { width: 22px; height: 22px; margin-left: 11px; }
.menu { display: flex; gap: 21.400px; margin-left: 11px; padding-top: 2px; color: #dcdcdc; white-space: nowrap; }
.search { width: 220px; height: 22px; margin-left: 21px; padding: 1px 7px 0 5px; background: #3a3a3a; color: #8c8c8c; display: flex; align-items: center; justify-content: space-between; }
.ic14 { width: 14px; height: 14px; }
.sln-name { width: 61px; height: 26px; margin-left: 18px; padding-top: 1px; background: #3d3d3d; color: #fff; font-weight: 700; display: flex; align-items: center; justify-content: center; }
.win-right { margin-left: auto; display: flex; align-items: center; }
.avatar { width: 20px; height: 20px; border-radius: 50%; background: #0a4e56; color: #e8e8e8; font-size: 12px; display: flex; align-items: center; justify-content: center; margin-right: 19px; }
.wc { width: 46px; display: flex; justify-content: center; }
.wc svg { width: 12px; height: 12px; }

/* ---------- toolbars ---------- */
.tb { display: flex; align-items: center; padding-left: 12px; white-space: nowrap; }
.tb1 { height: 27px; }
.tb2 { height: 25px; }
.tb3 { height: 25px; }
.grip { flex: none; width: 5px; height: 19px; background-image: radial-gradient(circle at 1px 1px, #6a6a6a .7px, transparent .9px); background-size: 2.500px 3px; }
.g2 { margin-left: 2px; }
.g3 { margin-left: 3px; }
.i { flex: none; width: 22px; height: 22px; display: flex; align-items: center; justify-content: center; }
.i svg { width: 16px; height: 16px; }
.i svg.wide { width: 18px; }
.i.first { margin-left: 4px; }
.blue { color: #4a9fee; }
.off { color: #5a5a5a; }
.light { color: #cfcfcf; }
.d { flex: none; width: 13px; display: flex; justify-content: center; }
.d::after { content: ""; border-top: 4px solid #cfcfcf; border-left: 3.500px solid transparent; border-right: 3.500px solid transparent; }
.d.off::after { border-top-color: #6a6a6a; }
.w11 { width: 11px; }
.sep { flex: none; width: 8px; display: flex; justify-content: center; }
.sep::after { content: ""; width: 1.500px; height: 20px; background: #4a4a4a; }
.w9 { width: 9px; }
.w7 { width: 7px; }
.w5 { width: 5px; }
.after-auto { margin-left: 3px; width: 9px; }
.ov { flex: none; width: 13px; align-self: flex-end; margin-bottom: 5px; display: flex; flex-direction: column; align-items: center; gap: 2px; }
.ov::before { content: ""; width: 7px; height: 1px; background: #d8d8d8; }
.ov::after { content: ""; border-top: 4px solid #d8d8d8; border-left: 3.500px solid transparent; border-right: 3.500px solid transparent; }
.ov-last { margin-left: 4px; }
.combo { flex: none; height: 23px; background: #3f3f3f; color: #858585; display: flex; align-items: center; justify-content: space-between; padding: 0 5px; font-size: 12.500px; }
.combo::after { content: ""; border-top: 4px solid #8a8a8a; border-left: 3.500px solid transparent; border-right: 3.500px solid transparent; }
.combo.lit { color: #dcdcdc; }
.lit { color: #dcdcdc; }
.combo.c-proc::after { display: none; }
.caret { border-top: 4px solid #8a8a8a; border-left: 3.500px solid transparent; border-right: 3.500px solid transparent; }
.caret.bright { border-top-color: #dcdcdc; }
.c-debug { width: 65px; margin-left: 5px; }
.c-x64 { width: 110px; margin-left: 6px; }
.play-slot { margin-left: 4px; }
.tb-label { color: #777; flex: none; padding-top: 1px; }
.continue { width: 43px; margin-left: 1px; }
.flame-slot { margin-left: 1px; }
.flame-slot svg { width: 19px; height: 19px; }
.c-auto { width: 130px; margin-left: 3px; }
.glass { flex: none; width: 22px; height: 22px; margin-left: 3px; border: 1px solid #cfcfcf; display: flex; align-items: center; justify-content: center; }
.glass svg { width: 17px; height: 17px; }
.proc-label { margin-left: 6px; width: 27px; color: #dcdcdc; }
.c-proc { width: 200px; margin-left: 6px; padding-left: 4px; padding-right: 4px; }
.life-slot { margin-left: 4px; }
.life-label { margin-left: 1px; width: 75px; }
.thread-label { margin-left: 4px; width: 27px; }
.c-thread { width: 200px; margin-left: 6px; justify-content: flex-end; }
.flag-slot { margin-left: 3px; }
.flag-slot2 { margin-left: 2px; }
.flag-slot3 { margin-left: -2px; }
.stack-label { margin-left: 3px; width: 40px; }
.c-stack { width: 240px; margin-left: 5px; margin-right: 3px; justify-content: flex-end; }
.share { margin-left: auto; display: flex; align-items: center; gap: 5px; color: #e0e0e0; font-size: 12.500px; }
.share svg { width: 16px; height: 16px; }
.feedback { width: 17px; height: 17px; margin: 0 19px 0 24px; }

/* ---------- workspace ---------- */
.workspace { flex: 1; min-height: 0; display: flex; padding: 0 6px; }

.solution { width: 352px; margin: 13px 0 7px; border: 1px solid #3a3a3a; border-top: 0; background: #1f1f1f; flex: none; }
.sol-title { height: 24px; background: #2d2d2d; padding: 2px 0 0 4px; display: flex; align-items: center; color: #d0d0d0; }
.sol-tools { height: 28px; display: flex; align-items: center; padding-left: 3px; }
.sol-search { height: 27px; background: #333; color: #8a8a8a; padding-left: 5px; display: flex; align-items: center; white-space: nowrap; }
.tree { list-style: none; margin: 0; padding: 0; }
.tree li { height: 20px; display: flex; align-items: center; padding-left: 11px; white-space: nowrap; color: #dcdcdc; }
.tree .tree-root { height: 18px; padding-left: 8px; }
.tree .active { background: #333; font-weight: 700; }
.arrow { width: 6px; height: 10px; flex: none; }
.lock { width: 8px; height: 10px; flex: none; margin: 0 2px 0 5px; }
.tree-root .lock { margin-left: 0; margin-right: 0; }
.nolockslot { width: 15px; flex: none; }
.node { width: 14px; height: 14px; flex: none; margin-left: 0; margin-right: 7px; }
.tree-root .node { margin-left: 0; margin-right: 4px; width: 15px; height: 15px; }
.ext { width: 15px; height: 15px; margin-right: 6px; }

.editor { flex: 1; min-width: 0; margin: 0 0 7px 6px; display: flex; flex-direction: column; }
.tabstrip { height: 34px; display: flex; align-items: flex-end; justify-content: flex-end; gap: 7px; padding: 0 1px 3px 0; }
.tabstrip .caret { margin-bottom: 3px; }
.tab-gear { width: 12px; height: 12px; color: #cfcfcf; }
.navbar { height: 24px; border-top: 2px solid #6a5bd6; display: flex; flex: none; background: #4a4a4a; }
.nav-combo { background: #3f3f3f; border-bottom: 1px solid #6a6a6a; display: flex; align-items: center; justify-content: space-between; padding: 0 3px 0 0; }
.nav-a { width: 1019px; justify-content: flex-end; }
.nav-b { width: 507px; margin-left: 4px; color: #dcdcdc; justify-content: flex-start; padding-left: 3px; }
.nav-b span { padding-top: 2px; }
.nav-b svg { width: 16px; height: 16px; margin-right: 4px; }
.nav-b .caret { margin-left: auto; }
.nav-split { flex: 1; display: flex; align-items: center; justify-content: center; background: #1f1f1f; }
.nav-split svg { width: 14px; height: 14px; }

.code { flex: 1; min-height: 0; display: flex; overflow: hidden; }
.glyph-margin { width: 16px; background: #333; flex: none; }
.lines { flex: 1; margin-top: -0.400px; }
.ln { height: 33.360px; position: relative; padding-left: 41px; font: 24px/33.360px "Noto Sans", sans-serif; color: #2b91af; }
.ln:nth-child(-n+9) { padding-left: 55px; }
.current::after { content: ""; position: absolute; inset: 0 0 0 -16px; border: 2px solid #3f3f3f; }
.vscroll { width: 20px; flex: none; background: #2e2e2e; border-right: 1px solid #3f3f3f; position: relative; display: flex; flex-direction: column; align-items: center; }
.tri-up { margin-top: 6px; border-bottom: 5px solid #8a8a8a; border-left: 5px solid transparent; border-right: 5px solid transparent; }
.vthumb { width: 11px; height: 271px; margin-top: 6px; background: #4f4f4f; }
.vmark { position: absolute; left: 0; right: 0; top: 106px; height: 2px; background: #e0e0e0; }
.tri-down { margin-top: auto; margin-bottom: 6px; border-top: 5px solid #8a8a8a; border-left: 5px solid transparent; border-right: 5px solid transparent; }

.editor-status { height: 18px; flex: none; display: flex; background: #2e2e2e; color: #c8c8c8; border-bottom: 1px solid #3f3f3f; }
.zoom-box { width: 61px; background: #3f3f3f; display: flex; align-items: center; justify-content: space-between; padding: 0 3px; }
.problems { width: 195px; padding: 2px 0 0 22px; display: flex; align-items: center; gap: 5px; color: #b8b8b8; }
.problems svg { width: 12px; height: 12px; }
.hscroll { flex: 1; display: flex; align-items: center; justify-content: space-between; padding: 0 7px; }
.tri-left { border-right: 5px solid #6a6a6a; border-top: 5px solid transparent; border-bottom: 5px solid transparent; }
.tri-right { border-left: 5px solid #6a6a6a; border-top: 5px solid transparent; border-bottom: 5px solid transparent; }
.pos { width: 244px; flex: none; display: flex; align-items: center; background: #1f1f1f; white-space: nowrap; padding-top: 1px; margin-right: 1px; }
.p1 { margin-left: 20px; width: 41px; }
.p2 { width: 52px; }
.p3 { width: 32px; }
.pbox { height: 16px; border: 1px solid #3a3a3a; display: flex; align-items: center; justify-content: center; }
.tabbox { width: 53px; }
.crlf { width: 44px; margin-left: 1px; }

/* ---------- status bar ---------- */
.statusbar { height: 21px; flex: none; background: #881c30; color: #fff; display: flex; align-items: center; font-size: 12.500px; padding-top: 3px; }
.ready-ic { width: 14px; height: 11px; margin-left: 5px; border: 1px solid #fff; transform: skewX(-10deg); }
.ready { margin-left: 9px; }
.st-right { margin-left: auto; display: flex; align-items: center; padding-right: 17px; }
.st-t { margin-left: 7px; }
.st-updn { width: 13px; height: 13px; }
.st-pen { width: 14px; height: 14px; margin-left: 26px; }
.st-br { width: 14px; height: 15px; margin-left: 22px; }
.st-git { width: 16px; height: 16px; margin-left: 27px; }
.st-bell { width: 14px; height: 15px; margin-left: 19px; }
.tri-w { margin-left: 7px; border-bottom: 4px solid #fff; border-left: 4px solid transparent; border-right: 4px solid transparent; }

/* ---------- console window ---------- */
.console { position: absolute; left: 161px; top: 107px; width: 977px; height: 510px; background: #0c0c0c; display: flex; flex-direction: column; box-shadow: 0 0 0 1px #3a3a3a; }
.con-title { height: 30px; padding-bottom: 1px; background: #fff; display: flex; align-items: center; color: #777; flex: none; }
.con-icon { width: 15px; height: 13px; margin-left: 8px; background: #4b2b86; color: #fff; font: 700 8px/13px "Liberation Mono", monospace; text-align: center; overflow: hidden; }
.con-path { margin-left: 7px; white-space: nowrap; font-size: 12.300px; }
.con-ctrl { margin-left: auto; display: flex; gap: 34px; padding-right: 18px; }
.con-ctrl svg { width: 11px; height: 11px; }
.con-body { flex: 1; display: flex; min-height: 0; }
.con-text { flex: 1; margin: 0; padding-top: 2px; font: 13.330px/16px "Liberation Mono", monospace; color: #cccccc; overflow: hidden; white-space: pre; }
.y { color: #f9f1a5; }
.g { color: #13a10e; }
.cursor-mark { display: inline-block; width: 8px; height: 3px; background: #ddd; vertical-align: -2px; }
.con-scroll { width: 17px; background: #f0f0f0; flex: none; display: flex; flex-direction: column; align-items: center; }
.con-up { width: 7px; height: 7px; margin-top: 7px; border-left: 2px solid #555; border-top: 2px solid #555; transform: rotate(45deg); }
.con-thumb { width: 15px; height: 17px; margin-top: 3px; background: #cdcdcd; }

/* ---------- GLFW window ---------- */
.gl-window { position: absolute; left: 435px; top: 244px; width: 1280px; height: 750px; display: flex; flex-direction: column; overflow: hidden; box-shadow: 0 0 16px rgba(0, 0, 0, .35); }
.gl-title { height: 30px; padding-bottom: 1px; background: #fff; color: #111; display: flex; align-items: center; flex: none; }
.gl-icon { width: 15px; height: 13px; margin: 0 6px 0 8px; background: linear-gradient(90deg, #4a8fa5 0 45%, #e8eef2 45% 70%, #cfd6da 70%); border: 1px solid #aab; }
.gl-ctrl { margin-left: auto; display: flex; gap: 35px; padding-right: 18px; }
.gl-ctrl svg { width: 11px; height: 11px; }
.gl-canvas { flex: 1; min-height: 0; background: #ff00ff; position: relative; }
.imgui { position: absolute; left: 979px; top: 220px; width: 400px; height: 500px; display: flex; flex-direction: column; background: #1b0d1e; border-left: 1px solid #4a4a5a; color: #e8e8e8; font: 11.670px/1 "Liberation Mono", monospace; white-space: nowrap; }
.im-title { height: 19px; background: #294a7a; display: flex; align-items: center; padding-left: 6px; flex: none; }
.tri-im-down { border-top: 8px solid #fff; border-left: 5px solid transparent; border-right: 5px solid transparent; margin-right: 6px; }
.im-menu { height: 19px; background: #242424; display: flex; align-items: center; gap: 16.500px; padding-left: 10px; flex: none; }
.im-body { padding: 0 0 0 4px; flex: 1; }
.im-hello { height: 29px; display: flex; align-items: center; padding-left: 3px; }
.im-h { height: 19px; margin-bottom: 4px; background: #293a63; display: flex; align-items: center; padding-left: 9px; }
.tri-im { border-left: 8px solid #fff; border-top: 5px solid transparent; border-bottom: 5px solid transparent; margin-right: 11px; }
```
